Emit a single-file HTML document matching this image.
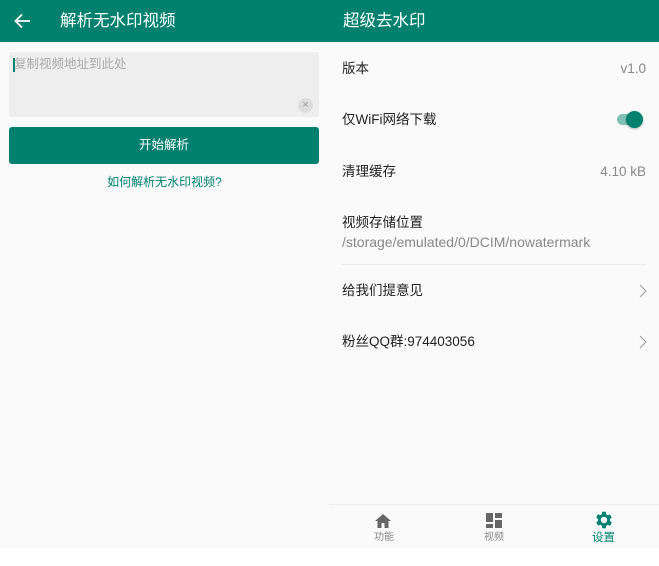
<!DOCTYPE html>
<html><head><meta charset="utf-8"><style>
*{margin:0;padding:0;box-sizing:border-box}
body{width:659px;height:566px;background:#fff;font-family:"Liberation Sans","Noto Sans CJK SC",sans-serif;position:relative;overflow:hidden}
.p{position:absolute;top:0;height:548px;background:#fafafa}
.hd{position:absolute;left:0;right:0;top:0;height:42px;background:#00806f;color:#fff;font-size:16.5px;line-height:20px}
.t{position:absolute;font-size:13.5px;line-height:16px;color:#222;white-space:nowrap}
.g{color:#888}
</style></head><body>
<div class="p" style="left:0;width:329px">
 <div class="hd">
  <svg style="position:absolute;left:13px;top:12px" width="18" height="18" viewBox="0 0 18 18"><path d="M17 9H2.5M9 2.5L2.5 9l6.5 6.5" stroke="#fff" stroke-width="1.8" fill="none"/></svg>
  <div style="position:absolute;left:60px;top:11px">解析无水印视频</div>
 </div>
 <div style="position:absolute;left:9px;top:52px;width:310px;height:65px;background:#eee;border-radius:3px">
  <div style="position:absolute;left:4px;top:6px;width:2px;height:14px;background:#00806f"></div>
  <div style="position:absolute;left:5px;top:5px;font-size:12.5px;line-height:15px;color:#aaa">复制视频地址到此处</div>
  <div style="position:absolute;left:289px;top:46px;width:15px;height:15px;border-radius:50%;background:#ddd;color:#999;font-size:11px;text-align:center;line-height:15px">×</div>
 </div>
 <div style="position:absolute;left:9px;top:127px;width:310px;height:37px;background:#00806f;border-radius:3px;color:#fff;font-size:12.5px;text-align:center;line-height:37px">开始解析</div>
 <div style="position:absolute;left:0;width:329px;top:175px;line-height:15px;text-align:center;font-size:12px;color:#00806f">如何解析无水印视频?</div>
</div>
<div class="p" style="left:329px;width:330px">
 <div class="hd"><div style="position:absolute;left:14px;top:11px">超级去水印</div></div>
 <div class="t" style="left:13px;top:61px">版本</div>
 <div class="t g" style="right:13px;top:61px">v1.0</div>
 <div class="t" style="left:13px;top:112px">仅WiFi网络下载</div>
 <div style="position:absolute;left:288px;top:114px;width:26px;height:11px;border-radius:6px;background:#80c0b7"></div>
 <div style="position:absolute;left:297px;top:111px;width:17px;height:17px;border-radius:50%;background:#00806f;box-shadow:0 1px 2px rgba(0,0,0,.3)"></div>
 <div class="t" style="left:13px;top:164px">清理缓存</div>
 <div class="t g" style="right:13px;top:164px">4.10 kB</div>
 <div class="t" style="left:13px;top:215px">视频存储位置</div>
 <div class="t g" style="left:13px;top:234px;font-size:14px">/storage/emulated/0/DCIM/nowatermark</div>
 <div style="position:absolute;left:13px;right:13px;top:264px;height:1px;background:#eaeaea"></div>
 <div class="t" style="left:13px;top:283px">给我们提意见</div>
 <svg style="position:absolute;left:310px;top:284px" width="8" height="14"><path d="M1 1l6 6-6 6" stroke="#999" stroke-width="1" fill="none"/></svg>
 <div class="t" style="left:13px;top:334px">粉丝QQ群:974403056</div>
 <svg style="position:absolute;left:310px;top:335px" width="8" height="14"><path d="M1 1l6 6-6 6" stroke="#999" stroke-width="1" fill="none"/></svg>
 <div style="position:absolute;left:0;right:0;top:504px;height:1px;background:#eee"></div>
 <svg style="position:absolute;left:45px;top:513px" width="18" height="16" viewBox="0 0 18 16"><path d="M9 1L1 8h2.5v7h4v-5h3v5h4V8H17z" fill="#666"/></svg>
 <div class="t g" style="left:45px;top:532px;font-size:10px;line-height:12px">功能</div>
 <svg style="position:absolute;left:157px;top:513px" width="16" height="15"><rect x="0" y="0" width="7" height="9" fill="#666"/><rect x="9" y="0" width="7" height="5" fill="#666"/><rect x="0" y="11" width="7" height="4" fill="#666"/><rect x="9" y="7" width="7" height="8" fill="#666"/></svg>
 <div class="t g" style="left:155px;top:532px;font-size:10px;line-height:12px">视频</div>
 <svg style="position:absolute;left:264px;top:509px" width="22" height="22" viewBox="0 0 24 24"><path fill="#00806f" d="M19.4 13a7.5 7.5 0 000-2l2.1-1.6-2-3.5-2.5 1a7.3 7.3 0 00-1.7-1L15 3h-4l-.4 2.7a7.3 7.3 0 00-1.7 1l-2.5-1-2 3.5L6.6 11a7.5 7.5 0 000 2l-2.1 1.6 2 3.5 2.5-1c.5.4 1.1.7 1.7 1L11 21h4l.4-2.7c.6-.3 1.2-.6 1.7-1l2.5 1 2-3.5zM13 15.5a3.5 3.5 0 110-7 3.5 3.5 0 010 7z" transform="translate(-1 0)"/></svg>
 <div class="t" style="left:263px;top:531px;font-size:11.5px;line-height:14px;color:#00806f">设置</div>
</div>
</body></html>
